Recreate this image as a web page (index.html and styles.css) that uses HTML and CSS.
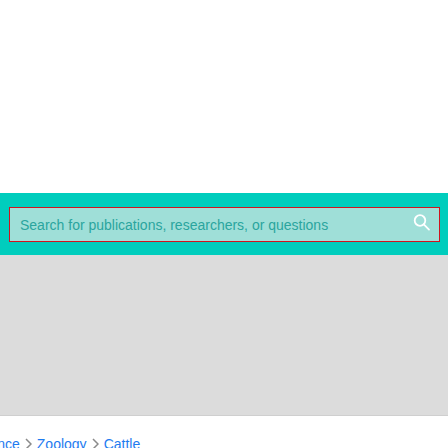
FILE: index.html
```html
<!DOCTYPE html>
<html lang="en">
<head>
<meta charset="utf-8">
<title>Search</title>
<link rel="stylesheet" href="styles.css">
</head>
<body>
  <header class="top"></header>
  <section class="search-band">
    <form class="search-box" onsubmit="return false">
      <input class="search-input" type="text" placeholder="Search for publications, researchers, or questions">
      <span class="search-icon">
        <svg width="18" height="18" viewBox="0 0 18 18" fill="none" stroke="#ffffff" stroke-width="1.8" stroke-linecap="round">
          <circle cx="7" cy="6.5" r="5.3"/>
          <line x1="10.8" y1="10.3" x2="16" y2="15.6"/>
        </svg>
      </span>
    </form>
  </section>
  <section class="banner"></section>
  <nav class="crumbs">
    <a href="#">Science</a>
    <span class="sep"><svg width="7" height="12" viewBox="0 0 7 12" fill="none" stroke="#8a8a8a" stroke-width="1.5"><polyline points="1,1 6,6 1,11"/></svg></span>
    <a href="#">Zoology</a>
    <span class="sep"><svg width="7" height="12" viewBox="0 0 7 12" fill="none" stroke="#8a8a8a" stroke-width="1.5"><polyline points="1,1 6,6 1,11"/></svg></span>
    <a href="#">Cattle</a>
  </nav>
</body>
</html>
```

FILE: styles.css
```css
html, body {
  margin: 0;
  padding: 0;
  background: #ffffff;
  font-family: "Liberation Sans", Arial, sans-serif;
  overflow: hidden;
}

.top {
  height: 193px;
  background: #ffffff;
}

.search-band {
  height: 62px;
  box-sizing: border-box;
  padding: 14px 8px 0 9px;
  background: #00cdbd;
}

.search-box {
  margin: 0;
  height: 35px;
  box-sizing: border-box;
  border: 1px solid #d0141e;
  background: #9fdfd8;
  display: flex;
  align-items: center;
  padding: 0 8px 0 10px;
}

.search-input {
  flex: 1;
  border: 0;
  outline: none;
  background: transparent;
  font-family: "Liberation Sans", Arial, sans-serif;
  font-size: 14px;
  color: #2aa59e;
  padding: 0;
  height: 20px;
}

.search-input::placeholder {
  color: #2aa59e;
  opacity: 1;
}

.search-icon {
  display: flex;
  width: 18px;
  height: 18px;
  margin-top: -3px;
}

.banner {
  height: 160px;
  background: #dcdcdc;
  border-bottom: 1px solid #cfcfcf;
}

.crumbs {
  display: flex;
  align-items: center;
  gap: 5px;
  margin-left: -30px;
  padding-top: 20px;
  font-size: 14px;
  line-height: 16px;
  white-space: nowrap;
}

.crumbs a {
  color: #1e7bf0;
  text-decoration: none;
}

.sep {
  display: flex;
  align-items: center;
}
```
